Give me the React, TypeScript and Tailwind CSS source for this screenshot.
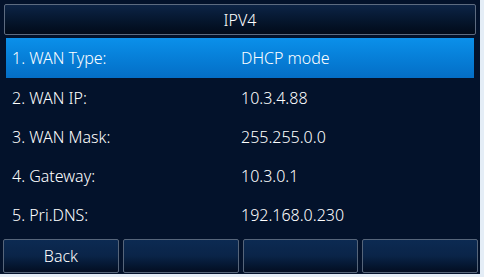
const rows = [
  { label: "1. WAN Type:", value: "DHCP mode" },
  { label: "2. WAN IP:", value: "10.3.4.88" },
  { label: "3. WAN Mask:", value: "255.255.0.0" },
  { label: "4. Gateway:", value: "10.3.0.1" },
  { label: "5. Pri.DNS:", value: "192.168.0.230" },
];

const softkeys = ["Back", "", "", ""];

export default function App() {
  return (
    <div className="w-[484px] h-[277px] bg-[#e4edf6] overflow-hidden" style={{ fontFamily: '"Noto Sans", "Open Sans", sans-serif' }}>
      <div className="w-[480px] h-[274px] bg-[#03122b] flex flex-col text-white font-light">
        <div className="mx-[4px] mt-[4px] h-[31px] rounded-[2px] border border-[#5d6b80] bg-gradient-to-b from-[#0d2446] to-[#020b1a] flex items-center justify-center text-[16px]">
          IPV4
        </div>
        <div className="mt-[3px] flex flex-col">
          {rows.map((row, i) => (
            <div
              key={row.label}
              className={
                i === 0
                  ? "mx-[6px] h-[40px] flex items-center bg-gradient-to-b from-[#0b90ea] to-[#046ec6] text-[16px]"
                  : "mx-[6px] h-[39.25px] flex items-center text-[16px]"
              }
            >
              <span className="w-[235px] pl-[6px]">{row.label}</span>
              <span>{row.value}</span>
            </div>
          ))}
        </div>
        <div className="mt-auto mb-[1px] ml-[3px] mr-[2px] grid grid-cols-4 gap-[4px]">
          {softkeys.map((key, i) => (
            <div
              key={i}
              className="h-[34px] rounded-[2px] border border-[#56657a] bg-gradient-to-b from-[#0c2a52] via-[#0a2448] to-[#030e22] flex items-center justify-center text-[16px]"
            >
              {key}
            </div>
          ))}
        </div>
      </div>
    </div>
  );
}
